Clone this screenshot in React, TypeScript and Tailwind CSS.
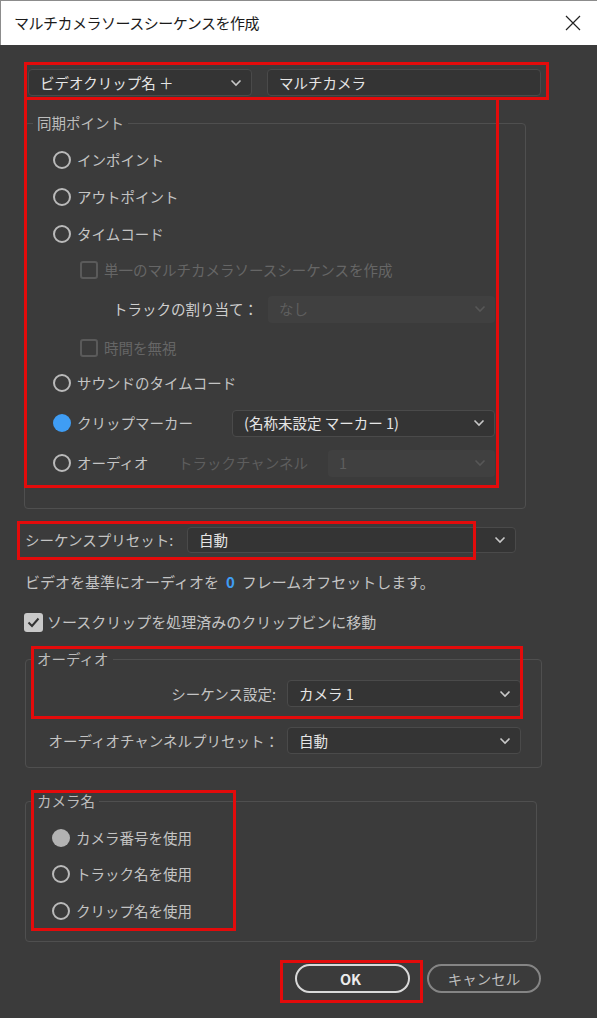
import React from "react";

const font = { fontFamily: '"Noto Sans CJK JP", "Noto Sans", sans-serif' };

const Chevron = ({ dim }: { dim?: boolean }) => (
  <svg width="12" height="8" viewBox="0 0 12 8" fill="none" stroke={dim ? "#575757" : "#c8c8c8"} strokeWidth="1.6">
    <path d="M1.5 1.5 6 6 10.5 1.5" />
  </svg>
);

const Select = ({ value, className, disabled }: { value: string; className: string; disabled?: boolean }) => (
  <div
    className={`flex shrink-0 items-center justify-between rounded-[4px] pl-[11px] pr-[9px] ${
      disabled ? "bg-[#404040]" : "border border-[#4a4a4a] bg-[#343434]"
    } ${className}`}
  >
    <span className={disabled ? "text-[#5e5e5e]" : "text-[#e6e6e6]"}>{value}</span>
    <Chevron dim={disabled} />
  </div>
);

const Radio = ({ state }: { state?: "blue" | "gray" }) =>
  state === "blue" ? (
    <span className="h-[18px] w-[18px] shrink-0 rounded-full bg-[#3f9df4]" />
  ) : state === "gray" ? (
    <span className="h-[18px] w-[18px] shrink-0 rounded-full bg-[#b3b3b3]" />
  ) : (
    <span className="h-[18px] w-[18px] shrink-0 rounded-full border-[2.5px] border-[#bababa]" />
  );

const RadioRow = ({ label, h, state }: { label: string; h: string; state?: "blue" | "gray" }) => (
  <div className={`flex items-center gap-[6px] ${h}`}>
    <Radio state={state} />
    <span>{label}</span>
  </div>
);

const Box = ({ className }: { className: string }) => (
  <div className={`pointer-events-none absolute border-[3px] border-[#e30b0b] ${className}`} />
);

export default function App() {
  return (
    <div style={font} className="relative h-[1018px] w-[597px] overflow-hidden bg-[#3b3b3b] text-[14.5px] text-[#c4c4c4]">
      {/* title bar */}
      <div className="flex h-[45px] items-center justify-between border-l border-t border-[#8c8c8c] bg-white pl-[13px] pr-[16px]">
        <span className="text-[15px] tracking-[-0.5px] text-[#1b1b1b]">マルチカメラソースシーケンスを作成</span>
        <svg width="16" height="16" viewBox="0 0 16 16" stroke="#222" strokeWidth="1.2">
          <path d="M1 1 15 15M15 1 1 15" />
        </svg>
      </div>

      <div className="flex flex-col pl-[24px]">
        {/* name row */}
        <div className="mt-[24px] flex h-[27px] gap-[15px] pl-[4px]">
          <Select value="ビデオクリップ名 ＋" className="h-[27px] w-[224px]" />
          <div className="flex h-[27px] w-[274px] items-center rounded-[4px] border border-[#4a4a4a] bg-[#343434] pl-[11px] text-[#e6e6e6]">
            マルチカメラ
          </div>
        </div>

        {/* sync point */}
        <fieldset className="mt-[18px] w-[501px] rounded-[4px] border border-[#4f4f4f] pb-[28px] pl-[28px] pr-[30px] pt-[10px]">
          <legend className="-ml-[20px] px-[4px] leading-[18px] text-[#bdbdbd]">同期ポイント</legend>
          <RadioRow label="インポイント" h="h-[36px]" />
          <RadioRow label="アウトポイント" h="h-[38px]" />
          <RadioRow label="タイムコード" h="h-[36px]" />
          <div className="ml-[27px] flex h-[36px] items-center gap-[6px] text-[#666666]">
            <span className="h-[18px] w-[18px] rounded-[3px] border-2 border-[#5a5a5a]" />
            <span>単一のマルチカメラソースシーケンスを作成</span>
          </div>
          <div className="flex h-[42px] items-center">
            <span className="w-[215px] pl-[60px] text-[#cfcfcf]">トラックの割り当て：</span>
            <Select value="なし" disabled className="h-[27px] w-[227px]" />
          </div>
          <div className="ml-[27px] flex h-[36px] items-center gap-[6px] text-[#666666]">
            <span className="h-[18px] w-[18px] rounded-[3px] border-2 border-[#5a5a5a]" />
            <span>時間を無視</span>
          </div>
          <RadioRow label="サウンドのタイムコード" h="h-[34px]" />
          <div className="flex h-[46px] items-center">
            <div className="flex w-[179px] items-center gap-[6px]">
              <Radio state="blue" />
              <span>クリップマーカー</span>
            </div>
            <Select value="(名称未設定 マーカー 1)" className="h-[27px] w-[263px]" />
          </div>
          <div className="flex h-[34px] items-center">
            <div className="flex w-[125px] items-center gap-[6px]">
              <Radio />
              <span>オーディオ</span>
            </div>
            <span className="w-[150px] text-[#5e5e5e]">トラックチャンネル</span>
            <Select value="1" disabled className="h-[27px] w-[167px]" />
          </div>
        </fieldset>

        {/* sequence preset */}
        <div className="mt-[18px] flex h-[26px] items-center">
          <span className="w-[163px] pl-[1px]">シーケンスプリセット:</span>
          <Select value="自動" className="h-[26px] w-[329px]" />
        </div>

        <div className="mt-[19px] flex h-[20px] items-center pl-[1px] text-[15px]">
          ビデオを基準にオーディオを<span className="mx-[7px] font-bold text-[#3f9df4]">0</span>フレームオフセットします。
        </div>

        <div className="mt-[20px] flex h-[20px] items-center gap-[4px] text-[15px]">
          <span className="flex h-[19px] w-[19px] items-center justify-center rounded-[3px] bg-[#c9c9c9]">
            <svg width="13" height="11" viewBox="0 0 13 11" fill="none" stroke="#333" strokeWidth="2">
              <path d="M1.5 5.5 5 9 11.5 1.5" />
            </svg>
          </span>
          <span>ソースクリップを処理済みのクリップビンに移動</span>
        </div>

        {/* audio */}
        <fieldset className="ml-[1px] mt-[18px] w-[517px] rounded-[4px] border border-[#4f4f4f] pb-[13px] pt-[12px]">
          <legend className="ml-[7px] px-[4px] leading-[18px] text-[#bdbdbd]">オーディオ</legend>
          <div className="flex h-[27px] items-center">
            <span className="w-[261px] pr-[11px] text-right">シーケンス設定:</span>
            <Select value="カメラ 1" className="h-[27px] w-[234px]" />
          </div>
          <div className="mt-[20px] flex h-[27px] items-center">
            <span className="w-[261px] pr-[8px] text-right">オーディオチャンネルプリセット：</span>
            <Select value="自動" className="h-[27px] w-[234px]" />
          </div>
        </fieldset>

        {/* camera name */}
        <fieldset className="ml-[1px] mt-[24px] w-[512px] rounded-[4px] border border-[#4f4f4f] pb-[12px] pl-[26px] pt-[10px]">
          <legend className="-ml-[19px] px-[4px] leading-[18px] text-[#bdbdbd]">カメラ名</legend>
          <RadioRow label="カメラ番号を使用" h="h-[36px]" state="gray" />
          <RadioRow label="トラック名を使用" h="h-[36px]" />
          <RadioRow label="クリップ名を使用" h="h-[37px]" />
        </fieldset>

        {/* buttons */}
        <div className="ml-[271px] mt-[22px] flex gap-[17px]">
          <button className="flex h-[29px] w-[115px] items-center justify-center rounded-full border-2 border-[#d9d9d9] pr-[4px] font-bold text-[#ececec]">
            OK
          </button>
          <button className="flex h-[29px] w-[114px] items-center justify-center rounded-full border-2 border-[#858585] text-[#bdbdbd]">
            キャンセル
          </button>
        </div>
      </div>

      {/* annotation boxes */}
      <Box className="left-[24px] top-[62px] h-[38px] w-[525px]" />
      <Box className="left-[24px] top-[97px] h-[391px] w-[475px]" />
      <Box className="left-[17px] top-[521px] h-[39px] w-[459px]" />
      <Box className="left-[31px] top-[646px] h-[73px] w-[492px]" />
      <Box className="left-[31px] top-[790px] h-[141px] w-[205px]" />
      <Box className="left-[280px] top-[960px] h-[43px] w-[143px]" />
    </div>
  );
}
